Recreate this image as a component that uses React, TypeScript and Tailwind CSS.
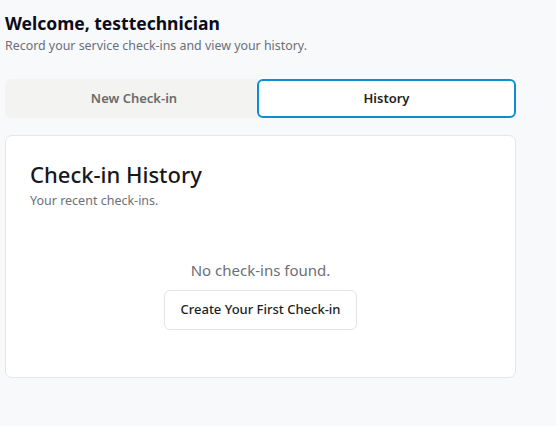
export default function App() {
  return (
    <div
      className="min-h-screen bg-[#f8f9fb] px-[5px] pt-[11px]"
      style={{ fontFamily: '"Noto Sans", "Open Sans", sans-serif' }}
    >
      <div className="w-[511px]">
        <h1 className="text-[17.5px] font-bold leading-[24px] text-[#0b0b1a]">
          Welcome, testtechnician
        </h1>
        <p className="mt-[2px] text-[12.4px] leading-[18px] text-[#6b6f76]">
          Record your service check-ins and view your history.
        </p>

        <div className="mt-[24px] grid grid-cols-[252px_1fr] rounded-[6px] bg-[#f3f3f1]">
          <button className="h-[39px] pl-[6px] text-[13px] font-semibold text-[#6b6b6b]">
            New Check-in
          </button>
          <button className="h-[39px] rounded-[6px] border-2 border-[#0a8fd0] bg-white text-[13px] font-semibold text-[#222]">
            History
          </button>
        </div>

        <div className="mt-[17px] rounded-[7px] border border-[#e5e6e8] bg-white px-[24px] pb-[47px] pt-[24px]">
          <h2 className="text-[22px] font-medium leading-[28px] text-[#16181d]">
            Check-in History
          </h2>
          <p className="mt-[5px] text-[12.5px] leading-[16px] text-[#6b6f76]">
            Your recent check-ins.
          </p>
          <div className="mt-[51px] flex flex-col items-center">
            <p className="text-[15px] leading-[20px] text-[#6b6f76]">
              No check-ins found.
            </p>
            <button className="mt-[10px] h-[40px] rounded-[6px] border border-[#e3e4e6] bg-white px-[15px] text-[13px] font-medium text-[#1c1e24]">
              Create Your First Check-in
            </button>
          </div>
        </div>
      </div>
    </div>
  );
}
